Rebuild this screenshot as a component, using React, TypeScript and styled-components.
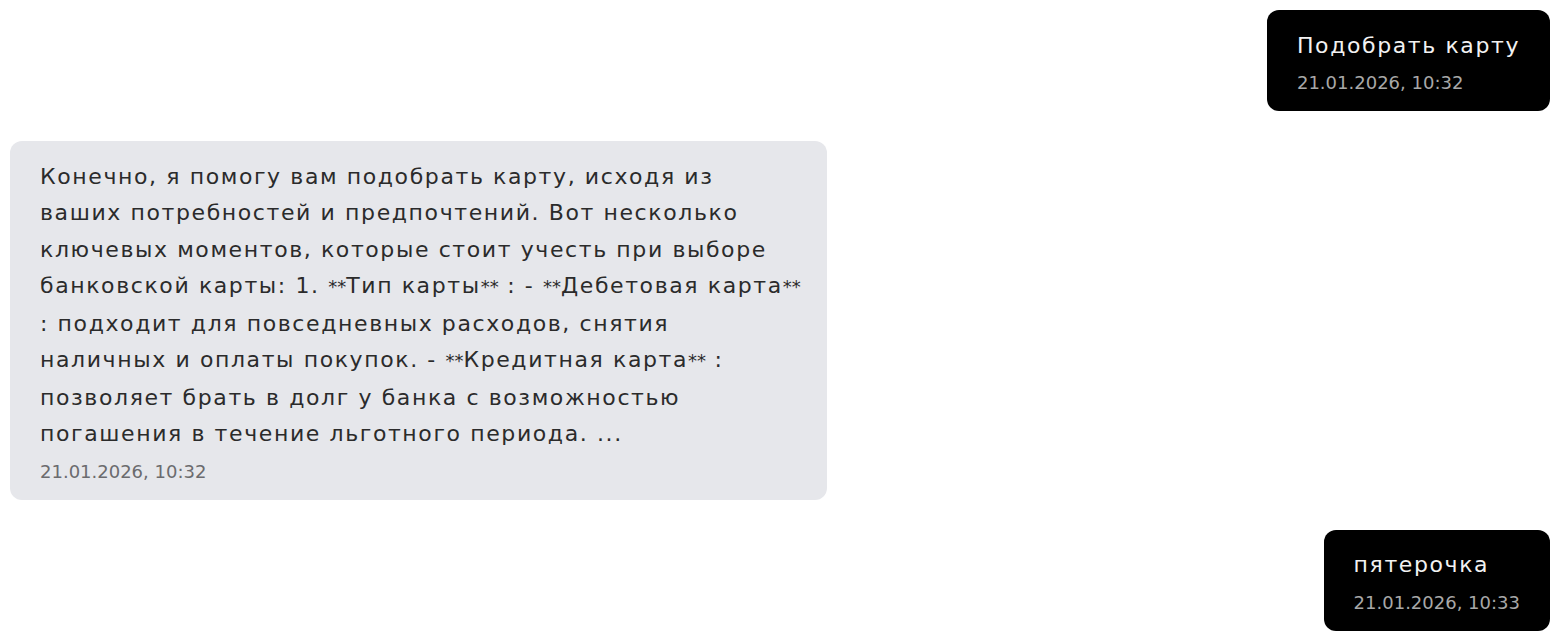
import React from "react";
import styled, { createGlobalStyle } from "styled-components";

const Global = createGlobalStyle`
  html, body { margin: 0; padding: 0; background: #ffffff; }
  body { font-family: "DejaVu Sans", "Noto Sans", sans-serif; }
`;

const Feed = styled.div`
  display: flex;
  flex-direction: column;
  gap: 30px;
  padding: 10px;
`;

const Row = styled.div<{ $mine: boolean }>`
  display: flex;
  justify-content: ${(p) => (p.$mine ? "flex-end" : "flex-start")};
`;

const Bubble = styled.div<{ $mine: boolean }>`
  box-sizing: border-box;
  padding: 17.5px 30px 15px;
  border-radius: 12px;
  background: ${(p) => (p.$mine ? "#000000" : "#e6e7eb")};
  color: ${(p) => (p.$mine ? "#f2f2f2" : "#2b2b2b")};
  width: ${(p) => (p.$mine ? "auto" : "817px")};
`;

const Body = styled.div`
  font-size: 22px;
  line-height: 36.5px;
  letter-spacing: 1.6px;
  white-space: nowrap;
`;

const Stars = styled.span`
  font-size: 18px;
  letter-spacing: 0;
`;

const Stamp = styled.div<{ $mine: boolean }>`
  margin-top: 6px;
  font-size: 18px;
  line-height: 26px;
  letter-spacing: 0;
  color: ${(p) => (p.$mine ? "#a8a8a8" : "#6b6b6e")};
`;

type Msg = { mine: boolean; lines: string[]; time: string };

const messages: Msg[] = [
  { mine: true, lines: ["Подобрать карту"], time: "21.01.2026, 10:32" },
  {
    mine: false,
    lines: [
      "Конечно, я помогу вам подобрать карту, исходя из",
      "ваших потребностей и предпочтений. Вот несколько",
      "ключевых моментов, которые стоит учесть при выборе",
      "банковской карты: 1. **Тип карты** : - **Дебетовая карта**",
      ": подходит для повседневных расходов, снятия",
      "наличных и оплаты покупок. - **Кредитная карта** :",
      "позволяет брать в долг у банка с возможностью",
      "погашения в течение льготного периода. ...",
    ],
    time: "21.01.2026, 10:32",
  },
  { mine: true, lines: ["пятерочка"], time: "21.01.2026, 10:33" },
];

function renderLine(line: string) {
  const parts = line.split("**");
  return parts.map((part, k) => (
    <React.Fragment key={k}>
      {part}
      {k < parts.length - 1 && <Stars>**</Stars>}
    </React.Fragment>
  ));
}

export default function App() {
  return (
    <>
      <Global />
      <Feed>
        {messages.map((m, i) => (
          <Row key={i} $mine={m.mine}>
            <Bubble $mine={m.mine}>
              <Body>
                {m.lines.map((l, j) => (
                  <React.Fragment key={j}>
                    {renderLine(l)}
                    {j < m.lines.length - 1 && <br />}
                  </React.Fragment>
                ))}
              </Body>
              <Stamp $mine={m.mine}>{m.time}</Stamp>
            </Bubble>
          </Row>
        ))}
      </Feed>
    </>
  );
}
